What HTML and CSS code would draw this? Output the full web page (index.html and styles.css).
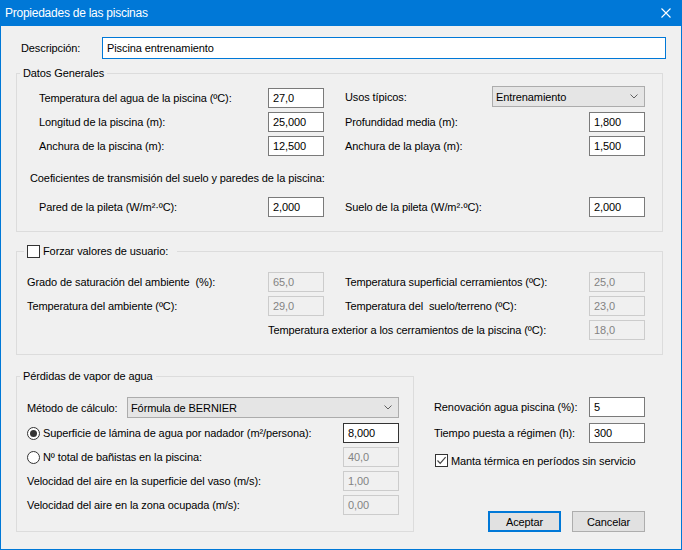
FILE: index.html
```html
<!DOCTYPE html>
<html lang="es">
<head>
<meta charset="utf-8">
<title>Propiedades de las piscinas</title>
<link rel="stylesheet" href="styles.css">
</head>
<body>
<div class="window">
  <div class="titlebar">
    <span class="title">Propiedades de las piscinas</span>
    <svg class="close" width="10" height="10" viewBox="0 0 10 10"><path d="M0.5 0.5L9.5 9.5M9.5 0.5L0.5 9.5" stroke="#fff" stroke-width="1.1" fill="none"/></svg>
  </div>
  <div class="content">
    <div class="desc-row">
      <span class="desc-label">Descripción:</span>
      <div class="field desc-field">Piscina entrenamiento</div>
    </div>

    <fieldset class="group g1">
      <legend class="legend">Datos Generales</legend>
      <div class="grid g1-grid">
        <span class="lbl">Temperatura del agua de la piscina (ºC):</span>
        <div class="field">27,0</div>
        <div class="combo-cell">
          <span class="lbl">Usos típicos:</span>
          <div class="combo combo-usos"><span>Entrenamiento</span><svg class="chev" width="8" height="5" viewBox="0 0 8 5"><path d="M0.5 0.5L4 4L7.5 0.5" stroke="#606060" fill="none"/></svg></div>
        </div>
        <span class="lbl">Longitud de la piscina (m):</span>
        <div class="field">25,000</div>
        <span class="lbl c4">Profundidad media (m):</span>
        <div class="field">1,800</div>
        <span class="lbl">Anchura de la piscina (m):</span>
        <div class="field">12,500</div>
        <span class="lbl c4">Anchura de la playa (m):</span>
        <div class="field">1,500</div>
      </div>
      <div class="coef">Coeficientes de transmisión del suelo y paredes de la piscina:</div>
      <div class="grid g1-grid pared">
        <span class="lbl">Pared de la pileta (W/m²·ºC):</span>
        <div class="field">2,000</div>
        <span class="lbl c4">Suelo de la pileta (W/m²·ºC):</span>
        <div class="field">2,000</div>
      </div>
    </fieldset>

    <fieldset class="group g2">
      <legend class="legend legend-check"><span class="checkbox"></span><span>Forzar valores de usuario:</span></legend>
      <div class="grid g2-grid">
        <span class="lbl">Grado de saturación del ambiente  (%):</span>
        <div class="field dis">65,0</div>
        <span class="lbl c4">Temperatura superficial cerramientos (ºC):</span>
        <div class="field dis">25,0</div>
        <span class="lbl">Temperatura del ambiente (ºC):</span>
        <div class="field dis">29,0</div>
        <span class="lbl c4">Temperatura del  suelo/terreno (ºC):</span>
        <div class="field dis">23,0</div>
        <span class="lbl span-ext">Temperatura exterior a los cerramientos de la piscina (ºC):</span>
        <div class="field dis">18,0</div>
      </div>
    </fieldset>

    <div class="bottom">
      <fieldset class="group g3">
        <legend class="legend">Pérdidas de vapor de agua</legend>
        <div class="method-row">
          <span class="lbl method-label">Método de cálculo:</span>
          <div class="combo combo-method"><span>Fórmula de BERNIER</span><svg class="chev" width="8" height="5" viewBox="0 0 8 5"><path d="M0.5 0.5L4 4L7.5 0.5" stroke="#606060" fill="none"/></svg></div>
        </div>
        <div class="row">
          <span class="opt"><span class="radio on"></span><span class="lbl">Superficie de lámina de agua por nadador (m²/persona):</span></span>
          <div class="field dark">8,000</div>
        </div>
        <div class="row">
          <span class="opt"><span class="radio"></span><span class="lbl">Nº total de bañistas en la piscina:</span></span>
          <div class="field dis">40,0</div>
        </div>
        <div class="row">
          <span class="lbl">Velocidad del aire en la superficie del vaso (m/s):</span>
          <div class="field dis">1,00</div>
        </div>
        <div class="row">
          <span class="lbl">Velocidad del aire en la zona ocupada (m/s):</span>
          <div class="field dis">0,00</div>
        </div>
      </fieldset>

      <div class="side">
        <div class="side-row">
          <span class="lbl">Renovación agua piscina (%):</span>
          <div class="field">5</div>
        </div>
        <div class="side-row second">
          <span class="lbl">Tiempo puesta a régimen (h):</span>
          <div class="field">300</div>
        </div>
        <div class="check-row">
          <span class="checkbox"><svg width="11" height="11" viewBox="0 0 11 11"><path d="M1.5 5.5L4.2 8.3L9.6 2.2" stroke="#444" stroke-width="1.2" fill="none"/></svg></span>
          <span class="lbl">Manta térmica en períodos sin servicio</span>
        </div>
        <div class="buttons">
          <div class="btn default">Aceptar</div>
          <div class="btn">Cancelar</div>
        </div>
      </div>
    </div>
  </div>
</div>
</body>
</html>
```

FILE: styles.css
```css
* { box-sizing: border-box; }

body {
  margin: 0;
  font-family: "Liberation Sans", Arial, sans-serif;
  font-size: 11px;
  letter-spacing: -0.1px;
  color: #000;
  background: #f0f0f0;
}

.window {
  width: 682px;
  height: 550px;
  border: 1px solid #0078d7;
  border-top: 0;
  background: #f0f0f0;
}

.titlebar {
  height: 26px;
  background: #0078d7;
  display: flex;
  align-items: center;
  padding: 0 10px 0 4px;
  color: #fff;
}

.title {
  font-size: 12px;
  letter-spacing: -0.25px;
}

.close {
  margin-left: auto;
  display: block;
}

.content {
  padding-left: 15px;
}

.lbl {
  white-space: pre;
  line-height: 14px;
}

/* Description */
.desc-row {
  margin-top: 11px;
  padding-left: 5px;
  height: 22px;
  display: flex;
  align-items: center;
}

.desc-label {
  width: 81px;
}

.field {
  width: 56px;
  height: 20px;
  border: 1px solid #7a7a7a;
  background: #fff;
  padding-left: 4px;
  line-height: 18px;
  white-space: nowrap;
}

.desc-field {
  width: 564px;
  height: 22px;
  line-height: 20px;
  border-color: #0078d7;
}

.field.dis {
  border-color: #cccccc;
  background: #f0f0f0;
  color: #838383;
}

.field.dark {
  border-color: #333333;
}

/* Group boxes */
.group {
  margin: 0;
  border: 1px solid #dcdcdc;
  min-inline-size: 0;
}

.legend {
  height: 15px;
  line-height: 15px;
  padding: 0 3px;
  margin-left: 3px;
}

.legend-check {
  display: flex;
  align-items: center;
  gap: 3px;
  margin-left: 7px;
  padding-right: 9px;
}

.g1 {
  width: 647px;
  margin-top: 7px;
  padding: 5px 0 12px 0;
}

.g2 {
  width: 647px;
  margin-top: 12px;
  padding: 11px 0 12px 0;
}

.grid {
  display: grid;
  grid-auto-rows: 24px;
  align-items: center;
}

.g1-grid {
  margin-left: 22px;
  grid-template-columns: 229px 56px 21px 244px 56px;
}

.g2-grid {
  margin-left: 10px;
  grid-template-columns: 241px 56px 21px 244px 56px;
}

.c4 {
  grid-column: 4;
}

.span-ext {
  grid-column: 2 / 5;
}

.combo-cell {
  grid-column: 4 / 6;
  display: flex;
  justify-content: space-between;
  align-items: center;
  align-self: start;
  height: 21px;
}

.combo {
  height: 21px;
  border: 1px solid #acacac;
  background: #e5e5e5;
  display: flex;
  align-items: center;
  justify-content: space-between;
  padding: 0 6px 0 3px;
  white-space: nowrap;
}

.combo-usos {
  width: 153px;
}

.chev {
  display: block;
}

.coef {
  margin: 13px 0 0 13px;
  line-height: 14px;
  white-space: nowrap;
}

.pared {
  margin-top: 10px;
}

/* Checkbox / radio */
.checkbox {
  width: 13px;
  height: 13px;
  border: 1px solid #333;
  background: #fff;
  display: flex;
  align-items: center;
  justify-content: center;
  flex: none;
}

.checkbox svg {
  display: block;
}

.radio {
  width: 13px;
  height: 13px;
  border: 1px solid #333;
  border-radius: 50%;
  background: #fff;
  display: flex;
  align-items: center;
  justify-content: center;
  flex: none;
}

.radio.on::after {
  content: "";
  width: 7px;
  height: 7px;
  border-radius: 50%;
  background: #333;
}

/* Bottom section */
.bottom {
  display: flex;
  margin-top: 14px;
}

.g3 {
  width: 398px;
  padding: 13px 0 14px 0;
}

.method-row {
  margin-left: 10px;
  width: 372px;
  height: 21px;
  display: flex;
  align-items: center;
}

.method-label {
  width: 100px;
}

.combo-method {
  width: 272px;
}

.row {
  margin-left: 10px;
  width: 372px;
  height: 24px;
  display: flex;
  align-items: center;
  justify-content: space-between;
}

.method-row + .row {
  margin-top: 3px;
}

.opt {
  display: flex;
  align-items: center;
  gap: 3px;
}

.side {
  width: 211px;
  margin-left: 20px;
  padding-top: 28px;
  display: flex;
  flex-direction: column;
}

.side-row {
  height: 20px;
  display: flex;
  align-items: center;
  justify-content: space-between;
}

.side-row.second {
  margin-top: 6px;
}

.check-row {
  margin-top: 11px;
  margin-left: 1px;
  height: 13px;
  display: flex;
  align-items: center;
  gap: 3px;
}

.buttons {
  margin-top: auto;
  display: flex;
  justify-content: flex-end;
  gap: 11px;
}

.btn {
  width: 73px;
  height: 21px;
  border: 1px solid #adadad;
  background: #e1e1e1;
  display: flex;
  align-items: center;
  justify-content: center;
}

.btn.default {
  border: 2px solid #0078d7;
}
```
